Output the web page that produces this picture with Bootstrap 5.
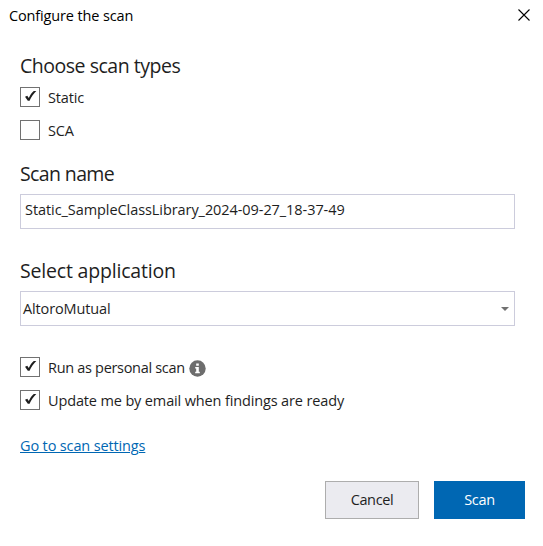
<!DOCTYPE html>
<html lang="en">
<head>
<meta charset="utf-8">
<meta name="viewport" content="width=device-width, initial-scale=1">
<title>Configure the scan</title>
<link href="https://cdn.jsdelivr.net/npm/bootstrap@5.3.0/dist/css/bootstrap.min.css" rel="stylesheet">
<style>
  body { font-family: "Open Sans", "Noto Sans", sans-serif; font-size: 14.5px; line-height: 20px; color: #1e1e1e; background: #fff; letter-spacing: -.14px; overflow: hidden; }
  .dialog { width: 543px; height: 546px; padding: 0 18px 0 20px; }
  .titlebar { height: 32px; margin: 0 -6px 21px -11px; color: #000; }
  .titlebar svg { margin-top: -2px; }
  .heading { font-size: 19.5px; line-height: 26px; font-weight: 400; margin: 0 0 7px; letter-spacing: -.19px; }
  .heading-types { letter-spacing: -.48px; margin-bottom: 8px; }
  .heading-name { letter-spacing: -.62px; }
  .option { height: 20px; gap: 8px; }
  .option + .option { margin-top: 13px; }
  .option span { padding-top: 2px; }
  .tight { letter-spacing: -.31px; }
  .box { width: 20px; height: 20px; border: 1px solid #717171; border-radius: 0; appearance: none; background: #fff center/18px 18px no-repeat; margin: 0; flex: none; }
  .box:checked { background-image: url("data:image/svg+xml,%3Csvg xmlns='http://www.w3.org/2000/svg' viewBox='0 0 18 18'%3E%3Cpath d='M4 8.7 6.3 7.8 7.8 10C9.2 7 11 4.5 12.8 3.1H15.3C12.5 5.9 10.2 9.3 8.6 12.7H6.8Z' fill='%231e1e1e'/%3E%3C/svg%3E"); }
  .field { width: 495px; height: 35px; border: 1px solid #ccccdc; background: #fff; }
  .name-field { padding: 0 4px 4px; letter-spacing: -.07px; }
  .app-field { padding: 0 5px 0 2px; }
  .name-section { margin-top: 21px; }
  .app-section { margin-top: 29px; }
  .options-section { margin: 31px 0 26px; }
  .info { margin: 3px 0 0 -4px; }
  .settings { color: #0067b3; text-underline-offset: 1px; text-decoration-thickness: 1px; }
  .actions { gap: 15px; margin-top: 25px; }
  .action { height: 38px; border-radius: 0; padding: 0; font-size: inherit; letter-spacing: -.35px; line-height: 20px; }
  .cancel { width: 94px; background: #ebebf0; border: 1px solid #adadad; color: #1e1e1e; }
  .scan { width: 91px; background: #0067b3; border: 1px solid #0067b3; color: #fff; }
</style>
</head>
<body>
<main class="dialog d-flex flex-column">
  <header class="titlebar d-flex align-items-center justify-content-between">
    <span>Configure the scan</span>
    <svg width="14" height="14" viewBox="0 0 14 14" role="img" aria-label="Close"><path d="M1.5 1.5l11 11M12.5 1.5l-11 11" stroke="#000" stroke-width="1.1"/></svg>
  </header>
  <section>
    <h2 class="heading heading-types">Choose scan types</h2>
    <label class="option d-flex align-items-center"><input class="box" type="checkbox" checked><span>Static</span></label>
    <label class="option d-flex align-items-center"><input class="box" type="checkbox"><span>SCA</span></label>
  </section>
  <section class="name-section">
    <h2 class="heading heading-name">Scan name</h2>
    <div class="field name-field d-flex align-items-center"><span>Static_SampleClassLibrary_2024-09-27_18-37-49</span></div>
  </section>
  <section class="app-section">
    <h2 class="heading">Select application</h2>
    <div class="field app-field d-flex align-items-center justify-content-between"><span>AltoroMutual</span>
      <svg width="8" height="4" viewBox="0 0 8 4"><path d="M0 0h8L4 4z" fill="#717171"/></svg></div>
  </section>
  <section class="options-section">
    <label class="option d-flex align-items-center"><input class="box" type="checkbox" checked><span class="tight">Run as personal scan</span>
      <svg class="info" width="17" height="17" viewBox="0 0 17 17"><circle cx="8.5" cy="8.5" r="8.2" fill="#6d6d6d"/><path d="M7.2 3.5h2.6v2.3H7.2zM6.2 7h3.6v4.7h1v1.5H6.2v-1.5h1V8.4h-1z" fill="#fff"/></svg></label>
    <label class="option d-flex align-items-center"><input class="box" type="checkbox" checked><span>Update me by email when findings are ready</span></label>
  </section>
  <div><a class="settings" href="#">Go to scan settings</a></div>
  <footer class="actions d-flex justify-content-end">
    <button class="btn action cancel" type="button">Cancel</button>
    <button class="btn action scan" type="button">Scan</button>
  </footer>
</main>
<script src="https://cdn.jsdelivr.net/npm/bootstrap@5.3.0/dist/js/bootstrap.bundle.min.js"></script>
</body>
</html>
